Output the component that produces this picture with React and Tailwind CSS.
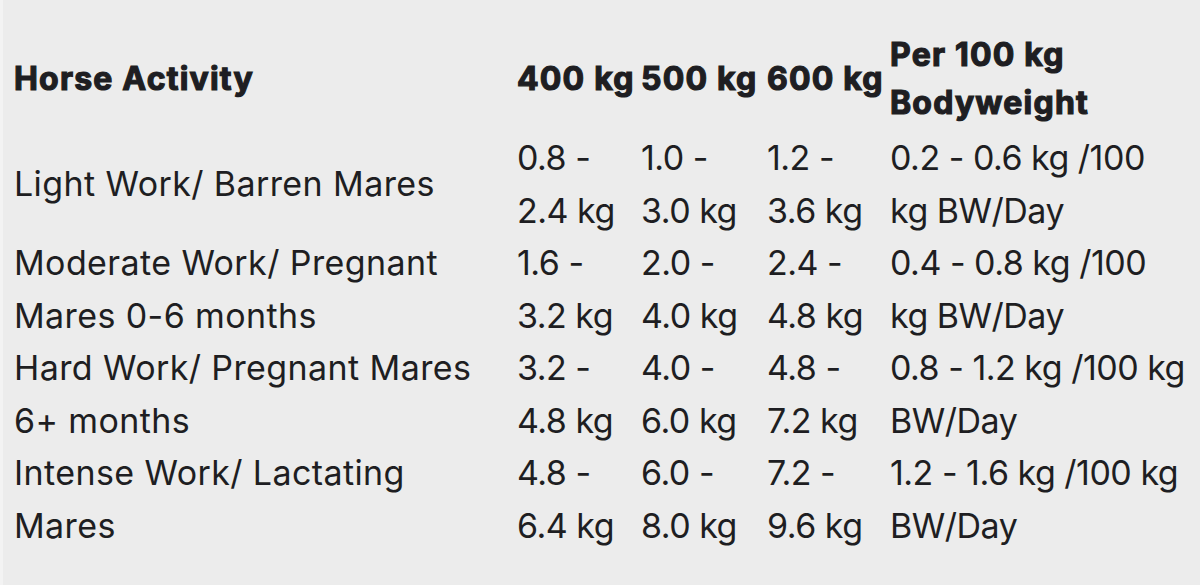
const rows = [
  {
    activity: ['Light Work/ Barren Mares'],
    values: [
      ['0.8 -', '2.4 kg'],
      ['1.0 -', '3.0 kg'],
      ['1.2 -', '3.6 kg'],
      ['0.2 - 0.6 kg /100', 'kg BW/Day'],
    ],
  },
  {
    activity: ['Moderate Work/ Pregnant', 'Mares 0-6 months'],
    values: [
      ['1.6 -', '3.2 kg'],
      ['2.0 -', '4.0 kg'],
      ['2.4 -', '4.8 kg'],
      ['0.4 - 0.8 kg /100', 'kg BW/Day'],
    ],
  },
  {
    activity: ['Hard Work/ Pregnant Mares', '6+ months'],
    values: [
      ['3.2 -', '4.8 kg'],
      ['4.0 -', '6.0 kg'],
      ['4.8 -', '7.2 kg'],
      ['0.8 - 1.2 kg /100 kg', 'BW/Day'],
    ],
  },
  {
    activity: ['Intense Work/ Lactating', 'Mares'],
    values: [
      ['4.8 -', '6.4 kg'],
      ['6.0 -', '8.0 kg'],
      ['7.2 -', '9.6 kg'],
      ['1.2 - 1.6 kg /100 kg', 'BW/Day'],
    ],
  },
];

function Lines({ lines }) {
  return lines.map((line, i) => (
    <div key={i} className="whitespace-nowrap">
      {line}
    </div>
  ));
}

export default function App() {
  return (
    <div className="h-[585px] w-[1200px] overflow-hidden bg-[#ececec] text-[#1e1e22] [font-family:Inter,'Liberation_Sans',sans-serif]">
      <div className="h-full border-l-[3px] border-[#f3f3f3] pl-[11px] pt-[31px]">
        <table className="table-fixed border-collapse">
          <colgroup>
            <col className="w-[503px]" />
            <col className="w-[124px]" />
            <col className="w-[126px]" />
            <col className="w-[123px]" />
            <col className="w-[300px]" />
          </colgroup>
          <thead>
            <tr className="text-[32px] font-black leading-[48px] tracking-[1.2px] [-webkit-text-stroke:1.2px_#1e1e22]">
              <th className="p-0 pb-[5px] text-left align-middle">Horse Activity</th>
              <th className="p-0 pb-[5px] text-left align-middle whitespace-nowrap">400 kg</th>
              <th className="p-0 pb-[5px] text-left align-middle whitespace-nowrap">500 kg</th>
              <th className="p-0 pb-[5px] text-left align-middle whitespace-nowrap">600 kg</th>
              <th className="p-0 pb-[5px] text-left align-middle">
                <Lines lines={['Per 100 kg', 'Bodyweight']} />
              </th>
            </tr>
          </thead>
          <tbody>
            {rows.map((row, r) => (
              <tr key={r} className="text-[34px] font-normal leading-[52.5px]">
                <td className="p-0 align-middle tracking-[0.4px]">
                  <Lines lines={row.activity} />
                </td>
                {row.values.map((v, c) => (
                  <td key={c} className="p-0 align-top tracking-[-0.5px]">
                    <Lines lines={v} />
                  </td>
                ))}
              </tr>
            ))}
          </tbody>
        </table>
      </div>
    </div>
  );
}
